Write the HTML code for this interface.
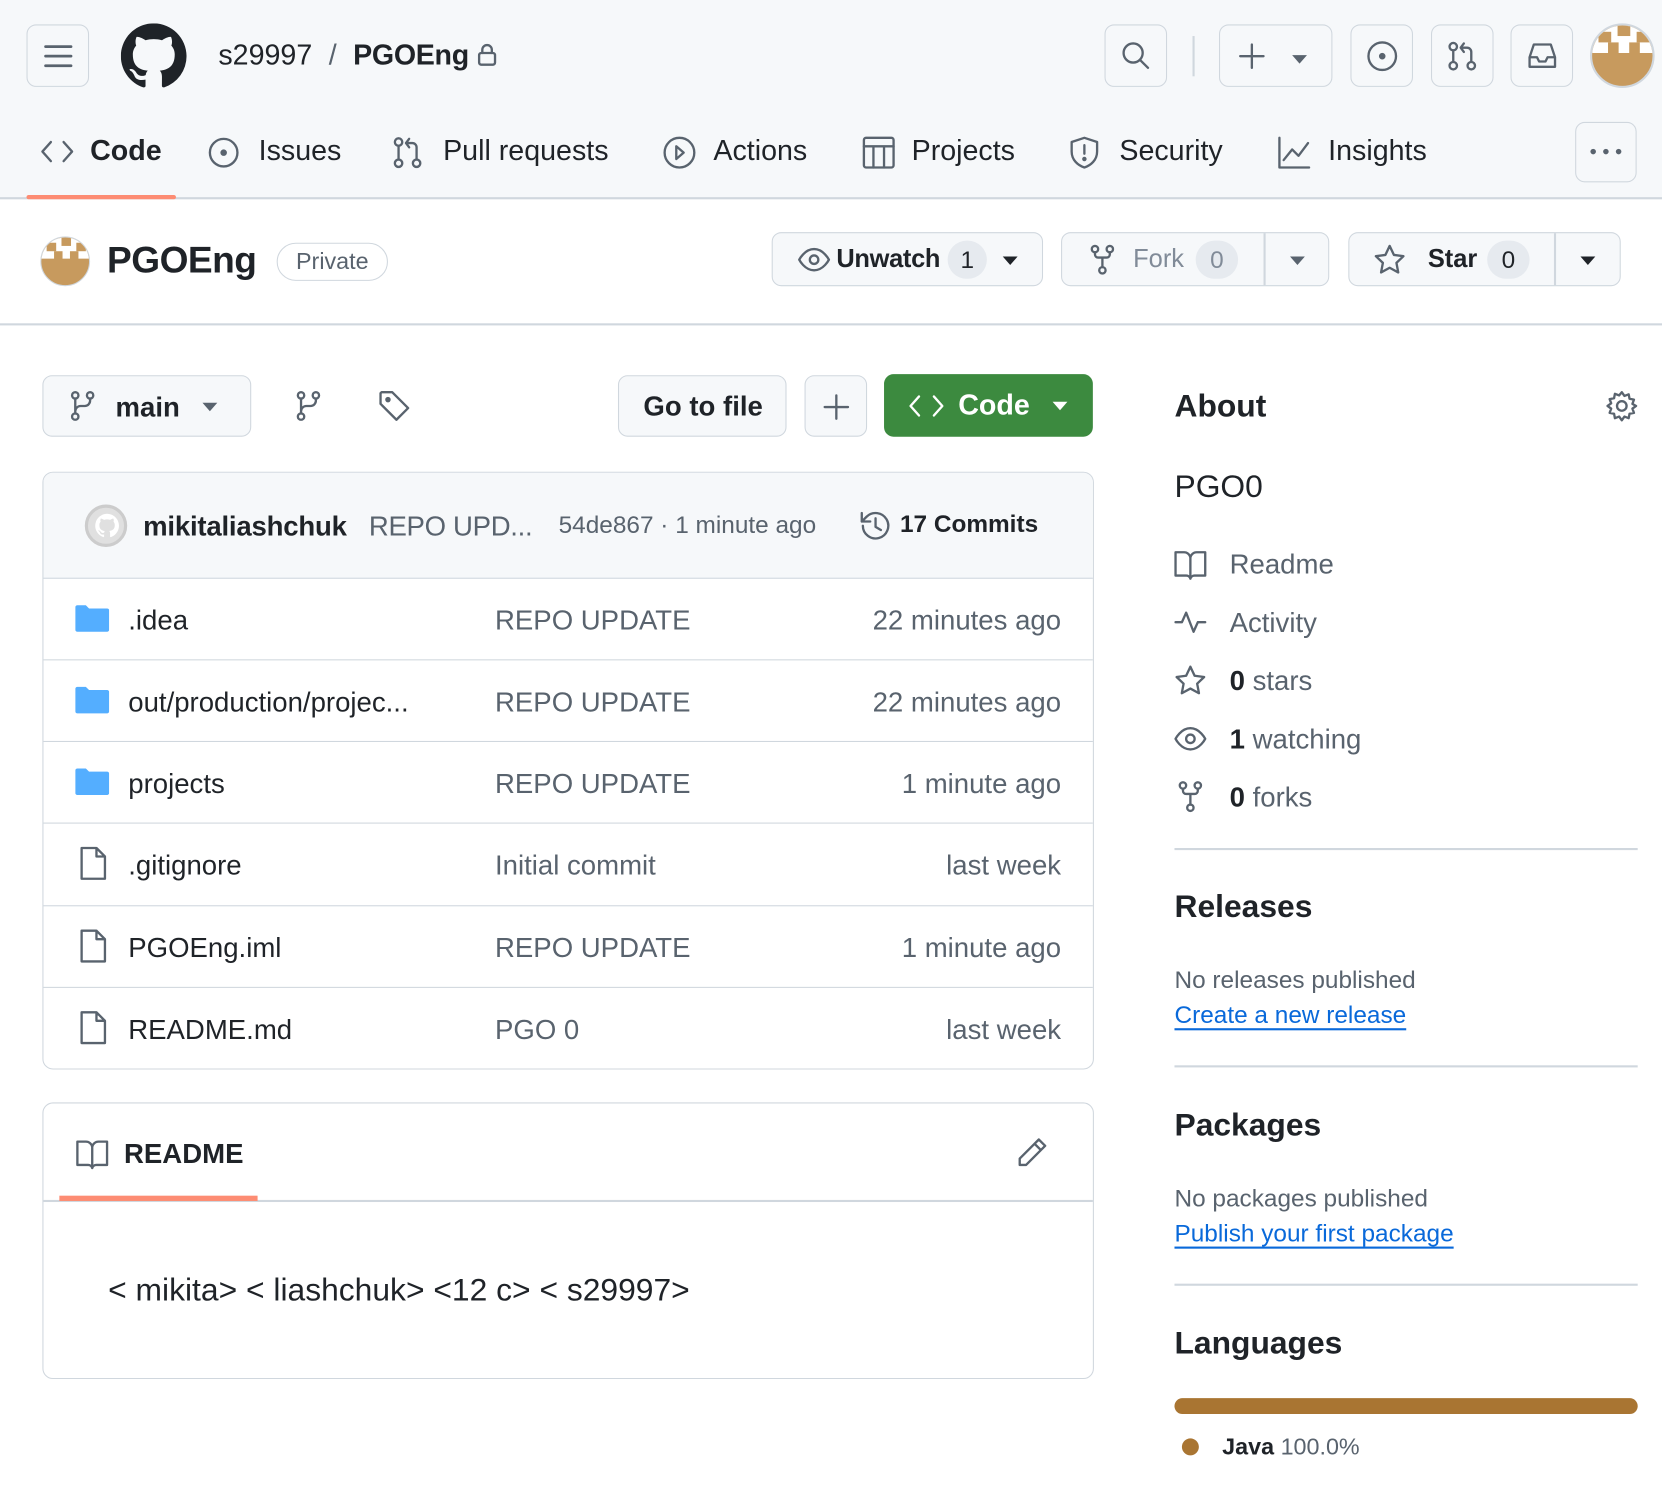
<!DOCTYPE html>
<html><head><meta charset="utf-8"><style>
*{box-sizing:border-box;margin:0;padding:0}
html,body{width:1662px;height:1500px;overflow:hidden;background:#fff}
#w{position:absolute;left:0;top:0;width:1568px;height:1416px;transform:scale(1.06);transform-origin:0 0;font-family:"Liberation Sans",sans-serif;color:#1f2328}
.a{position:absolute}
.btn{position:absolute;border:1.5px solid #d0d7de;border-radius:9px;background:#f6f8fa}
.t{position:absolute;white-space:nowrap}
svg{position:absolute;fill:none;stroke:#59636e;stroke-width:2.2;stroke-linecap:round;stroke-linejoin:round}
.row{position:absolute;left:0;width:991px;height:77px;border-top:1.5px solid #d0d7de}
.row .n{position:absolute;left:80px;top:24px;font-size:26px;color:#1f2328}
.row .m{position:absolute;left:426px;top:24px;font-size:26px;color:#59636e}
.row .d{position:absolute;right:31px;top:24px;font-size:26px;color:#59636e}
.side{font-size:26px;color:#59636e}
.h2{font-size:30px;font-weight:bold;color:#1f2328}
.lnk{color:#0969da;text-decoration:underline;text-underline-offset:5px;font-size:23px}
</style></head><body><div id="w">
<div class="a" style="left:0;top:0;width:1568px;height:188px;background:#f6f8fa;border-bottom:2px solid #d0d7de"></div>
<div class="btn" style="left:25px;top:23px;width:59px;height:59px"></div>
<svg style="left:40px;top:38px" width="30" height="30"><path d="M3 6h24M3 15h24M3 24h24" stroke-width="2.6"/></svg>
<svg style="left:114px;top:22px;fill:#1f2328;stroke:none" width="62" height="62" viewBox="0 0 16 16"><path d="M8 0C3.58 0 0 3.58 0 8c0 3.54 2.290 6.53 5.47 7.59.4.07.55-.17.55-.38 0-.19-.01-.82-.01-1.490-2.01.37-2.53-.49-2.69-.94-.09-.23-.48-.94-.82-1.130-.28-.15-.68-.52-.01-.53.63-.01 1.080.58 1.230.82.72 1.210 1.870.87 2.330.66.07-.52.28-.87.51-1.070-1.780-.2-3.640-.89-3.640-3.950 0-.87.31-1.590.82-2.150-.08-.2-.36-1.020.08-2.120 0 0 .67-.21 2.200.82.64-.18 1.320-.27 2-.27.68 0 1.360.09 2 .27 1.530-1.040 2.200-.82 2.200-.82.44 1.100.16 1.920.08 2.120.51.56.82 1.270.82 2.150 0 3.070-1.870 3.750-3.650 3.950.29.25.54.73.54 1.480 0 1.070-.01 1.930-.01 2.200 0 .21.15.46.55.38A8.013 8.013 0 0016 8c0-4.420-3.580-8-8-8z"/></svg>
<div class="t" style="left:206px;top:37px;font-size:27px">s29997 <span style="color:#59636e;margin:0 8px">/</span> <b style="letter-spacing:-0.3px">PGOEng</b></div>
<svg style="left:450px;top:40px" width="20" height="24"><rect x="2" y="10" width="15" height="11" rx="2"/><path d="M5 10V7a4.5 4.5 0 019 0v3"/></svg>
<div class="btn" style="left:1042px;top:23px;width:59px;height:59px"></div>
<svg style="left:1056px;top:37px" width="32" height="32"><circle cx="13" cy="13" r="9"/><path d="M20 20l7 7"/></svg>
<div class="a" style="left:1125px;top:34px;width:2px;height:38px;background:#d0d7de"></div>
<div class="btn" style="left:1150px;top:23px;width:107px;height:59px"></div>
<svg style="left:1166px;top:38px" width="30" height="30"><path d="M15 4v22M4 15h22"/></svg>
<svg style="left:1216px;top:48px;fill:#59636e;stroke:none" width="20" height="14"><path d="M3 4h14l-7 8z"/></svg>
<div class="btn" style="left:1274px;top:23px;width:59px;height:59px"></div>
<svg style="left:1288px;top:37px" width="32" height="32"><circle cx="16" cy="16" r="13"/><circle cx="16" cy="16" r="2" fill="#59636e"/></svg>
<div class="btn" style="left:1350px;top:23px;width:59px;height:59px"></div>
<svg style="left:1364px;top:37px" width="32" height="32"><circle cx="7" cy="7" r="3.5"/><circle cx="7" cy="25" r="3.5"/><circle cx="24" cy="25" r="3.5"/><path d="M7 11v10M24 21V12a4 4 0 00-4-4h-6M17 4l-3 4 3 4"/></svg>
<div class="btn" style="left:1425px;top:23px;width:59px;height:59px"></div>
<svg style="left:1439px;top:37px" width="32" height="32"><path d="M4 17l4-12h16l4 12v9H4z M4 17h7l2 4h6l2-4h7"/></svg>
<div class="a" style="left:1500px;top:22px;width:61px;height:61px;border-radius:50%;background:#c79a5e;overflow:hidden;border:2px solid #d0d7de">
<div class="a" style="left:0;top:0;width:61px;height:26px;background:#fff"></div>
<div class="a" style="left:6px;top:6px;width:12px;height:10px;background:#c79a5e"></div><div class="a" style="left:24px;top:0;width:12px;height:10px;background:#c79a5e"></div><div class="a" style="left:42px;top:6px;width:12px;height:10px;background:#c79a5e"></div><div class="a" style="left:15px;top:16px;width:10px;height:10px;background:#c79a5e"></div><div class="a" style="left:35px;top:16px;width:10px;height:10px;background:#c79a5e"></div></div>
<svg style="left:38px;top:129px" width="32" height="28"><path d="M10 5L2 14l8 9M22 5l8 9-8 9"/></svg>
<div class="t" style="left:85px;top:127px;font-size:27px;font-weight:bold">Code</div>
<svg style="left:195px;top:128px" width="32" height="32"><circle cx="16" cy="16" r="13"/><circle cx="16" cy="16" r="2" fill="#59636e"/></svg>
<div class="t" style="left:244px;top:127px;font-size:27px">Issues</div>
<svg style="left:369px;top:127px" width="32" height="34"><circle cx="7" cy="7" r="3.5"/><circle cx="7" cy="27" r="3.5"/><circle cx="24" cy="27" r="3.5"/><path d="M7 11v12M24 23V12a4 4 0 00-4-4h-6M17 4l-3 4 3 4"/></svg>
<div class="t" style="left:418px;top:127px;font-size:27px">Pull requests</div>
<svg style="left:625px;top:127px" width="32" height="34"><circle cx="16" cy="17" r="14"/><path d="M13 11l7 6-7 6z"/></svg>
<div class="t" style="left:673px;top:127px;font-size:27px">Actions</div>
<svg style="left:812px;top:127px" width="34" height="34"><rect x="3" y="3" width="28" height="28" rx="2"/><path d="M3 11h28M12 11v20M22 11v20"/></svg>
<div class="t" style="left:860px;top:127px;font-size:27px">Projects</div>
<svg style="left:1007px;top:127px" width="32" height="34"><path d="M16 3l12 4v9c0 8-6 13-12 15C10 29 4 24 4 16V7z M16 10v8"/><circle cx="16" cy="23" r="1" fill="#59636e"/></svg>
<div class="t" style="left:1056px;top:127px;font-size:27px">Security</div>
<svg style="left:1204px;top:127px" width="34" height="34"><path d="M3 3v28h28M7 24l8-10 6 6 9-12"/></svg>
<div class="t" style="left:1253px;top:127px;font-size:27px">Insights</div>
<div class="btn" style="left:1486px;top:115px;width:58px;height:57px"></div>
<svg style="left:1497px;top:135px;fill:#59636e;stroke:none" width="36" height="16"><circle cx="6" cy="8" r="2.6"/><circle cx="18" cy="8" r="2.6"/><circle cx="30" cy="8" r="2.6"/></svg>
<div class="a" style="left:25px;top:184px;width:141px;height:4px;background:#fd8c73;border-radius:2px"></div>
<div class="a" style="left:38px;top:223px;width:47px;height:47px;border-radius:50%;background:#c79a5e;overflow:hidden;border:1.5px solid #d0d7de"><div class="a" style="left:0;top:0;width:47px;height:20px;background:#fff"></div><div class="a" style="left:5px;top:5px;width:9px;height:8px;background:#c79a5e"></div><div class="a" style="left:19px;top:0;width:9px;height:8px;background:#c79a5e"></div><div class="a" style="left:33px;top:5px;width:9px;height:8px;background:#c79a5e"></div><div class="a" style="left:12px;top:13px;width:8px;height:8px;background:#c79a5e"></div><div class="a" style="left:27px;top:13px;width:8px;height:8px;background:#c79a5e"></div></div>
<div class="t" style="left:101px;top:226px;font-size:35px;font-weight:bold;letter-spacing:-0.5px">PGOEng</div>
<div class="a" style="left:261px;top:229px;width:105px;height:36px;border:1.5px solid #d0d7de;border-radius:18px;font-size:22px;color:#59636e;text-align:center;line-height:33px">Private</div>
<div class="btn" style="left:728px;top:219px;width:256px;height:51px"></div>
<svg style="left:752px;top:231px" width="32" height="28"><path d="M2 14s5-10 14-10 14 10 14 10-5 10-14 10S2 14 2 14z"/><circle cx="16" cy="14" r="4"/></svg>
<div class="t" style="left:789px;top:231px;font-size:24px;font-weight:bold;letter-spacing:-0.3px">Unwatch</div>
<div class="a" style="left:894px;top:227px;width:37px;height:36px;border-radius:18px;background:#e6eaef;font-size:23px;text-align:center;line-height:36px">1</div>
<svg style="left:943px;top:239px;fill:#1f2328;stroke:none" width="20" height="14"><path d="M3 3h14l-7 8z"/></svg>
<div class="btn" style="left:1001px;top:219px;width:253px;height:51px"></div>
<div class="a" style="left:1192px;top:220px;width:1.5px;height:49px;background:#d0d7de"></div>
<svg style="left:1027px;top:230px" width="26" height="30"><circle cx="6" cy="5" r="3"/><circle cx="20" cy="5" r="3"/><circle cx="13" cy="25" r="3"/><path d="M6 8v2a3 3 0 003 3h8a3 3 0 003-3V8M13 13v9"/></svg>
<div class="t" style="left:1069px;top:231px;font-size:24px;color:#818b98">Fork</div>
<div class="a" style="left:1128px;top:227px;width:40px;height:36px;border-radius:18px;background:#e6eaef;font-size:23px;text-align:center;line-height:36px;color:#818b98">0</div>
<svg style="left:1214px;top:239px;fill:#59636e;stroke:none" width="20" height="14"><path d="M3 3h14l-7 8z"/></svg>
<div class="btn" style="left:1272px;top:219px;width:257px;height:51px"></div>
<div class="a" style="left:1466px;top:220px;width:1.5px;height:49px;background:#d0d7de"></div>
<svg style="left:1295px;top:229px" width="32" height="32"><path d="M16 3l4 8.5 9 1.2-6.6 6.3 1.7 9L16 23.6 7.9 28l1.7-9L3 12.7l9-1.2z"/></svg>
<div class="t" style="left:1347px;top:231px;font-size:24px;font-weight:bold">Star</div>
<div class="a" style="left:1403px;top:227px;width:40px;height:36px;border-radius:18px;background:#e6eaef;font-size:23px;text-align:center;line-height:36px">0</div>
<svg style="left:1488px;top:239px;fill:#1f2328;stroke:none" width="20" height="14"><path d="M3 3h14l-7 8z"/></svg>
<div class="a" style="left:0;top:305px;width:1568px;height:2px;background:#d0d7de"></div>
<div class="btn" style="left:40px;top:354px;width:197px;height:58px"></div>
<svg style="left:64px;top:368px" width="30" height="30"><circle cx="7" cy="5" r="3"/><circle cx="7" cy="25" r="3"/><circle cx="21" cy="5" r="3"/><path d="M7 8v14M21 8v2a5 5 0 01-5 5h-4a5 5 0 00-5 5"/></svg>
<div class="t" style="left:109px;top:369px;font-size:26px;font-weight:bold">main</div>
<svg style="left:188px;top:377px;fill:#59636e;stroke:none" width="20" height="14"><path d="M3 3h14l-7 8z"/></svg>
<svg style="left:277px;top:368px" width="30" height="30"><circle cx="7" cy="5" r="3"/><circle cx="7" cy="25" r="3"/><circle cx="21" cy="5" r="3"/><path d="M7 8v14M21 8v2a5 5 0 01-5 5h-4a5 5 0 00-5 5"/></svg>
<svg style="left:356px;top:367px" width="32" height="32"><path d="M3 4v10l15 15 11-11L14 3H4z"/><circle cx="10" cy="10" r="1.5" fill="#59636e"/></svg>
<div class="btn" style="left:583px;top:354px;width:159px;height:58px"></div>
<div class="t" style="left:607px;top:368px;font-size:26px;font-weight:bold">Go to file</div>
<div class="btn" style="left:759px;top:354px;width:59px;height:58px"></div>
<svg style="left:774px;top:369px" width="30" height="30"><path d="M15 4v22M4 15h22"/></svg>
<div class="a" style="left:834px;top:353px;width:197px;height:59px;background:#3c8a3f;border-radius:9px"></div>
<svg style="left:857px;top:369px;stroke:#fff" width="34" height="28"><path d="M10 5L2 14l8 9M24 5l8 9-8 9"/></svg>
<div class="t" style="left:904px;top:367px;font-size:27px;font-weight:bold;color:#fff">Code</div>
<svg style="left:990px;top:376px;fill:#fff;stroke:none" width="20" height="14"><path d="M3 3h14l-7 8z"/></svg>
<div class="a" style="left:40px;top:445px;width:992px;height:564px;border:1.5px solid #d0d7de;border-radius:10px;overflow:hidden">
<div class="a" style="left:0;top:0;width:992px;height:100px;background:#f6f8fa"></div>
<div class="a" style="left:39px;top:30px;width:40px;height:40px;border-radius:50%;background:#e0e0e0;border:3px solid #ccc"><svg style="left:5px;top:4px;fill:#fff;stroke:none" width="26" height="26" viewBox="0 0 16 16"><path d="M8 1a7 7 0 00-2.2 13.6c.35.06.48-.15.48-.33v-1.2c-1.95.42-2.36-.94-2.36-.94-.32-.8-.78-1.02-.78-1.02-.63-.43.05-.42.05-.42.7.05 1.07.72 1.07.72.63 1.07 1.64.76 2.04.58.06-.45.24-.76.44-.94-1.56-.18-3.2-.78-3.2-3.47 0-.77.27-1.4.72-1.88-.07-.18-.31-.9.07-1.86 0 0 .59-.19 1.93.72a6.6 6.6 0 013.5 0c1.34-.91 1.93-.72 1.93-.72.38.96.14 1.68.07 1.86.45.49.72 1.11.72 1.88 0 2.7-1.64 3.29-3.21 3.46.25.22.48.65.48 1.3v1.93c0 .19.13.4.48.33A7 7 0 008 1z"/></svg></div>
<div class="t" style="left:94px;top:35px;font-size:26px;font-weight:bold;letter-spacing:-0.2px">mikitaliashchuk</div>
<div class="t" style="left:307px;top:35px;font-size:26px;color:#59636e;letter-spacing:-0.3px">REPO UPD...</div>
<div class="t" style="left:486px;top:36px;font-size:23px;color:#59636e">54de867 · 1 minute ago</div>
<svg style="left:768px;top:33px" width="34" height="34"><path d="M5 17a12 12 0 103.5-8.5L4 13M4 5v8h8M17 10v8l5 3"/></svg>
<div class="t" style="left:808px;top:35px;font-size:23px;font-weight:bold">17 Commits</div>
<div class="row" style="top:99px"><svg style="left:30px;top:24px;fill:#54aeff;stroke:none" width="32" height="28"><path d="M0 3a2 2 0 012-2h8l3 3h17a2 2 0 012 2v18a2 2 0 01-2 2H2a2 2 0 01-2-2z"/></svg><div class="n">.idea</div><div class="m">REPO UPDATE</div><div class="d">22 minutes ago</div></div>
<div class="row" style="top:176px"><svg style="left:30px;top:24px;fill:#54aeff;stroke:none" width="32" height="28"><path d="M0 3a2 2 0 012-2h8l3 3h17a2 2 0 012 2v18a2 2 0 01-2 2H2a2 2 0 01-2-2z"/></svg><div class="n">out/production/projec...</div><div class="m">REPO UPDATE</div><div class="d">22 minutes ago</div></div>
<div class="row" style="top:253px"><svg style="left:30px;top:24px;fill:#54aeff;stroke:none" width="32" height="28"><path d="M0 3a2 2 0 012-2h8l3 3h17a2 2 0 012 2v18a2 2 0 01-2 2H2a2 2 0 01-2-2z"/></svg><div class="n">projects</div><div class="m">REPO UPDATE</div><div class="d">1 minute ago</div></div>
<div class="row" style="top:330px"><svg style="left:33px;top:21px" width="28" height="34"><path d="M3 2h14l8 8v21H3z M17 2v8h8"/></svg><div class="n">.gitignore</div><div class="m">Initial commit</div><div class="d">last week</div></div>
<div class="row" style="top:408px"><svg style="left:33px;top:21px" width="28" height="34"><path d="M3 2h14l8 8v21H3z M17 2v8h8"/></svg><div class="n">PGOEng.iml</div><div class="m">REPO UPDATE</div><div class="d">1 minute ago</div></div>
<div class="row" style="top:485px"><svg style="left:33px;top:21px" width="28" height="34"><path d="M3 2h14l8 8v21H3z M17 2v8h8"/></svg><div class="n">README.md</div><div class="m">PGO 0</div><div class="d">last week</div></div>
</div>
<div class="a" style="left:40px;top:1040px;width:992px;height:261px;border:1.5px solid #d0d7de;border-radius:10px;overflow:hidden">
<div class="a" style="left:0;top:91px;width:992px;height:1.5px;background:#d0d7de"></div>
<div class="a" style="left:15px;top:87px;width:187px;height:5px;background:#fd8c73"></div>
<svg style="left:30px;top:33px" width="32" height="30"><path d="M2 3h8a6 6 0 016 5v20a4 4 0 00-4-3H2z M30 3h-8a6 6 0 00-6 5v20a4 4 0 014-3h10z"/></svg>
<div class="t" style="left:76px;top:32px;font-size:26px;font-weight:bold">README</div>
<svg style="left:917px;top:30px" width="32" height="34"><path d="M22 4l6 6L10 28H4v-6z M18 8l6 6"/></svg>
<div class="t" style="left:61px;top:160px;font-size:30px">&lt; mikita&gt; &lt; liashchuk&gt; &lt;12 c&gt; &lt; s29997&gt;</div>
</div>
<div class="t h2" style="left:1108px;top:367px">About</div>
<svg style="left:1514px;top:367px" width="32" height="32"><circle cx="16" cy="16" r="4.5"/><path d="M16 3l2.5 3.5 4-1.5.8 4.2 4.2.8-1.5 4L29.5 16 26 18.5l1.5 4-4.2.8-.8 4.2-4-1.5L16 29.5 13.5 26l-4 1.5-.8-4.2-4.2-.8 1.5-4L2.5 16 6 13.5l-1.5-4 4.2-.8.8-4.2 4 1.5z"/></svg>
<div class="t" style="left:1108px;top:443px;font-size:30px">PGO0</div>
<svg style="left:1107px;top:518px" width="32" height="30"><path d="M2 3h8a6 6 0 016 5v20a4 4 0 00-4-3H2z M30 3h-8a6 6 0 00-6 5v20a4 4 0 014-3h10z"/></svg>
<div class="t side" style="left:1160px;top:517px">Readme</div>
<svg style="left:1107px;top:573px" width="32" height="28"><path d="M2 14h6l4-9 7 18 4-9h7"/></svg>
<div class="t side" style="left:1160px;top:572px">Activity</div>
<svg style="left:1107px;top:626px" width="32" height="32"><path d="M16 3l4 8.5 9 1.2-6.6 6.3 1.7 9L16 23.6 7.9 28l1.7-9L3 12.7l9-1.2z"/></svg>
<div class="t side" style="left:1160px;top:627px"><b style="color:#1f2328">0</b> stars</div>
<svg style="left:1107px;top:683px" width="32" height="28"><path d="M2 14s5-10 14-10 14 10 14 10-5 10-14 10S2 14 2 14z"/><circle cx="16" cy="14" r="4"/></svg>
<div class="t side" style="left:1160px;top:682px"><b style="color:#1f2328">1</b> watching</div>
<svg style="left:1110px;top:736px" width="26" height="32"><circle cx="6" cy="5" r="3"/><circle cx="20" cy="5" r="3"/><circle cx="13" cy="26" r="3"/><path d="M6 8v2a3 3 0 003 3h8a3 3 0 003-3V8M13 13v10"/></svg>
<div class="t side" style="left:1160px;top:737px"><b style="color:#1f2328">0</b> forks</div>
<div class="a" style="left:1108px;top:800px;width:437px;height:2px;background:#d0d7de"></div>
<div class="t h2" style="left:1108px;top:839px">Releases</div>
<div class="t" style="left:1108px;top:911px;font-size:23px;color:#59636e">No releases published</div>
<div class="t lnk" style="left:1108px;top:944px">Create a new release</div>
<div class="a" style="left:1108px;top:1005px;width:437px;height:2px;background:#d0d7de"></div>
<div class="t h2" style="left:1108px;top:1045px">Packages</div>
<div class="t" style="left:1108px;top:1117px;font-size:23px;color:#59636e">No packages published</div>
<div class="t lnk" style="left:1108px;top:1150px">Publish your first package</div>
<div class="a" style="left:1108px;top:1211px;width:437px;height:2px;background:#d0d7de"></div>
<div class="t h2" style="left:1108px;top:1251px">Languages</div>
<div class="a" style="left:1108px;top:1319px;width:437px;height:15px;background:#a97532;border-radius:8px"></div>
<div class="a" style="left:1115px;top:1357px;width:16px;height:16px;border-radius:50%;background:#a97532"></div>
<div class="t" style="left:1153px;top:1352px;font-size:22px"><b>Java</b> <span style="color:#59636e">100.0%</span></div>
</div></body></html>
